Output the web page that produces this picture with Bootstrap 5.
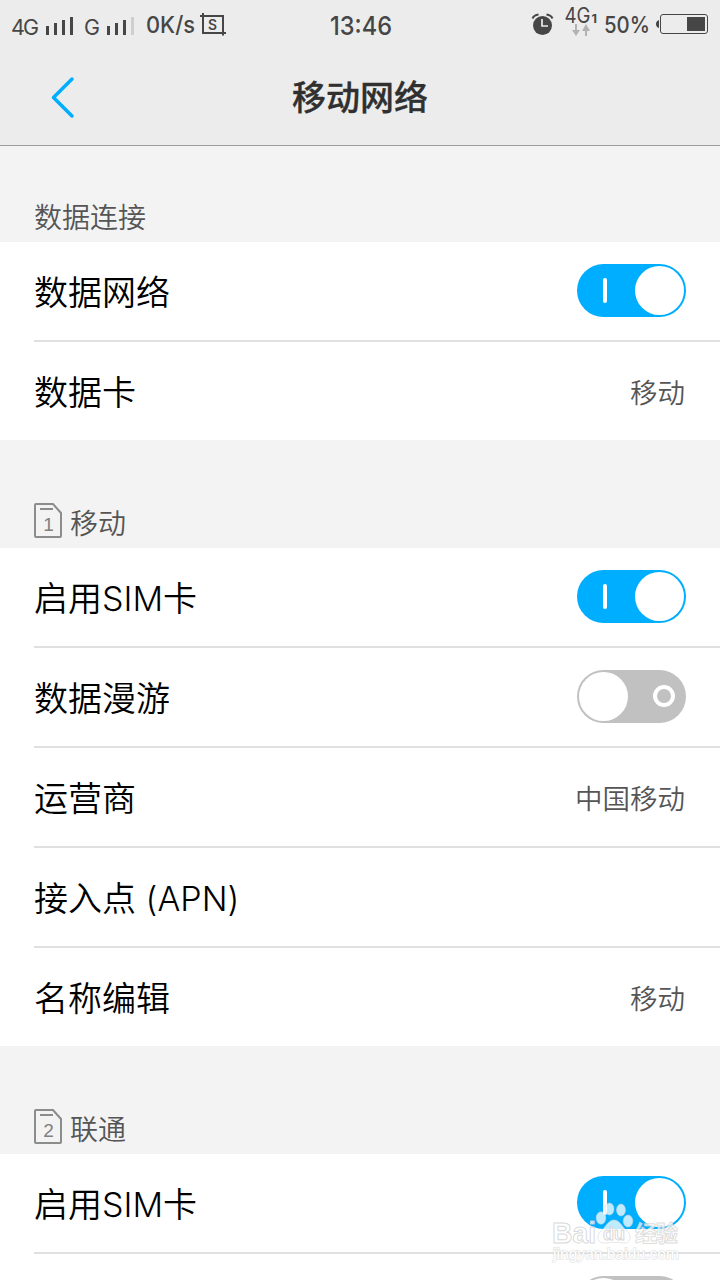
<!DOCTYPE html>
<html lang="zh-CN">
<head>
<meta charset="utf-8">
<meta name="viewport" content="width=device-width, initial-scale=1">
<title>移动网络</title>
<link rel="stylesheet" href="https://cdn.jsdelivr.net/npm/bootstrap@5.3.0/dist/css/bootstrap.min.css">
<style>
  body { font-family: Inter, "Noto Sans CJK SC", sans-serif; background: #f3f3f3; color: #000; }
  .screen { width: 720px; height: 1280px; background: #f3f3f3; }
  .topbar { height: 146px; background: #ececec; border-bottom: 1px solid #9c9c9c; }
  .status { height: 50px; color: #464646; }
  .status svg text { font-family: Inter, "Noto Sans CJK SC", sans-serif; fill: #464646; }
  .titlebar { height: 95px; }
  .titlebar h1 { font: 500 34px/50px "Noto Sans CJK SC", sans-serif; color: #303030; -webkit-text-stroke: .3px #303030; padding-bottom: 4px; }
  .back { width: 186px; padding-left: 50px; }
  .section-title { height: 108px; padding: 0 0 4px 34px; font-size: 28px; line-height: 40px; font-weight: 350; color: #555; gap: 8px; }
  .section-title.first { height: 96px; }
  .section-title svg { margin-bottom: 5px; }
  .settings { background: #fff; padding-left: 34px; }
  .setting { height: 100px; padding-right: 34px; border-bottom: 2px solid #e0e0e0; font-size: 34px; line-height: 50px; font-weight: 350; }
  .setting:last-child { height: 98px; border-bottom: 0; }
  .settings.open .setting:last-child { height: 100px; border-bottom: 2px solid #e0e0e0; }
  .setting > span { padding-top: 4px; }
  .setting .value { font-size: 27.5px; color: #555; margin-right: 1px; }
  .switch { width: 109px; height: 53px; border-radius: 27px; padding: 2px; background: #c1c1c1; margin-bottom: 2px; }
  .switch.on { background: #00aeff; flex-direction: row-reverse; }
  .knob { width: 49px; height: 49px; border-radius: 50%; background: #fff; }
  .tick { width: 4px; height: 25px; border-radius: 2px; background: #fff; margin-left: 24px; }
  .ring { width: 22px; height: 22px; border: 4px solid #fff; border-radius: 50%; margin-right: 9px; }
  .watermark { right: 32px; bottom: 12px; }
</style>
</head>
<body>
<main class="screen position-relative overflow-hidden">
  <header class="topbar">
    <div class="status d-flex justify-content-between">
      <svg width="240" height="50" viewBox="0 0 240 50">
        <text x="11" y="35" font-size="21.5" textLength="28">4G</text>
        <path fill="#464646" d="M46 26h3v9h-3zM54 23h3v12h-3zM62 20h3v15h-3zM70 17h3v18h-3z"/>
        <text x="84" y="35" font-size="21.5" textLength="16" lengthAdjust="spacingAndGlyphs">G</text>
        <path fill="#464646" d="M107 26h3v9h-3zM115 23h3v12h-3zM123 20h3v15h-3z"/>
        <path fill="#cfcfcf" d="M131 17h3v18h-3z"/>
        <text x="146" y="33" font-size="23" font-weight="450" textLength="49" lengthAdjust="spacingAndGlyphs">0K/s</text>
        <path fill="none" stroke="#464646" stroke-width="2" d="M200 16h23v19.500M203 13v20h23"/>
        <text x="208" y="29.500" font-size="14" font-weight="600" textLength="9" lengthAdjust="spacingAndGlyphs">S</text>
      </svg>
      <svg width="80" height="50" viewBox="320 0 80 50">
        <text x="330" y="35" font-size="26" font-weight="450" textLength="62" lengthAdjust="spacingAndGlyphs">13:46</text>
      </svg>
      <svg width="240" height="50" viewBox="480 0 240 50">
        <circle cx="542.500" cy="25.500" r="9.500" fill="#464646"/>
        <path d="M532.500 18.500q1.500-3.500 6-4M552.500 18.500q-1.500-3.500-6-4" fill="none" stroke="#464646" stroke-width="2"/>
        <path d="M542 19v7h6" fill="none" stroke="#ececec" stroke-width="1.700"/>
        <text x="564.500" y="23" font-size="21.500" textLength="26" lengthAdjust="spacingAndGlyphs">4G</text>
        <text x="591.500" y="23" font-size="12" font-weight="700" textLength="5.500" lengthAdjust="spacingAndGlyphs">1</text>
        <path fill="#b2b2b2" d="M575 24h2v6h3l-4 6-4-6h3zM585 36h2v-5h3l-4-7-4 7h3z"/>
        <text x="604" y="33" font-size="23" font-weight="450" textLength="46" lengthAdjust="spacingAndGlyphs">50%</text>
        <path fill="#464646" d="M659 20v8q-3-1-3-4t3-4zM687 17h18v14h-18z"/>
        <rect x="660.500" y="14.500" width="47" height="19" rx="2.500" fill="none" stroke="#464646"/>
      </svg>
    </div>
    <div class="titlebar d-flex align-items-center justify-content-between">
      <div class="back d-flex">
        <svg width="26" height="44" viewBox="0 0 26 44"><path d="M22 3 3.500 21.500 22 40" fill="none" stroke="#00aeff" stroke-width="3.500" stroke-linecap="round" stroke-linejoin="round"/></svg>
      </div>
      <h1 class="m-0">移动网络</h1>
      <div class="back"></div>
    </div>
  </header>

  <div class="section-title first d-flex align-items-end">数据连接</div>
  <section class="settings">
    <div class="setting d-flex align-items-center justify-content-between"><span>数据网络</span><div class="switch on d-flex align-items-center justify-content-between"><i class="knob"></i><i class="tick"></i></div></div>
    <div class="setting d-flex align-items-center justify-content-between"><span>数据卡</span><span class="value">移动</span></div>
  </section>

  <div class="section-title d-flex align-items-end">
    <svg width="28" height="36" viewBox="0 0 28 36"><path d="M2 1h17l8 9v23q0 1-1 1H2q-1 0-1-1V2q0-1 1-1zM6 6h13" fill="none" stroke="#8c8c8c" stroke-width="2"/><text x="14.500" y="28" text-anchor="middle" font-family="Liberation Sans" font-size="19" fill="#808080">1</text></svg>
    <span>移动</span>
  </div>
  <section class="settings">
    <div class="setting d-flex align-items-center justify-content-between"><span>启用SIM卡</span><div class="switch on d-flex align-items-center justify-content-between"><i class="knob"></i><i class="tick"></i></div></div>
    <div class="setting d-flex align-items-center justify-content-between"><span>数据漫游</span><div class="switch d-flex align-items-center justify-content-between"><i class="knob"></i><i class="ring"></i></div></div>
    <div class="setting d-flex align-items-center justify-content-between"><span>运营商</span><span class="value">中国移动</span></div>
    <div class="setting d-flex align-items-center justify-content-between"><span>接入点 (APN)</span></div>
    <div class="setting d-flex align-items-center justify-content-between"><span>名称编辑</span><span class="value">移动</span></div>
  </section>

  <div class="section-title d-flex align-items-end">
    <svg width="28" height="36" viewBox="0 0 28 36"><path d="M2 1h17l8 9v23q0 1-1 1H2q-1 0-1-1V2q0-1 1-1zM6 6h13" fill="none" stroke="#8c8c8c" stroke-width="2"/><text x="14.500" y="28" text-anchor="middle" font-family="Liberation Sans" font-size="19" fill="#808080">2</text></svg>
    <span>联通</span>
  </div>
  <section class="settings open">
    <div class="setting d-flex align-items-center justify-content-between"><span>启用SIM卡</span><div class="switch on d-flex align-items-center justify-content-between"><i class="knob"></i><i class="tick"></i></div></div>
    <div class="setting d-flex align-items-center justify-content-between"><span></span><div class="switch d-flex align-items-center justify-content-between"><i class="knob"></i><i class="ring"></i></div></div>
  </section>

  <svg class="watermark position-absolute" width="138" height="68" viewBox="550 1200 138 68">
    <g fill="#fff" fill-opacity=".75" stroke="#cfcfcf" stroke-opacity=".5" stroke-width="1">
      <ellipse cx="601" cy="1218" rx="4.800" ry="6.200"/>
      <ellipse cx="609.500" cy="1209" rx="4.500" ry="6"/>
      <ellipse cx="621" cy="1210" rx="4.500" ry="6"/>
      <ellipse cx="628" cy="1221" rx="4.800" ry="6"/>
      <path d="M614 1220c6 0 8 7 13 11 6 5 3 13-4 12-6-1-12-1-18 0-7 1-10-7-4-12 5-4 7-11 13-11z"/>
      <text x="552" y="1243" font-weight="700" font-family="Liberation Sans" font-size="29" textLength="44" lengthAdjust="spacingAndGlyphs" stroke-opacity=".8">Bai</text>
      <text x="603" y="1240" font-weight="700" font-family="Liberation Sans" font-size="18" textLength="22" lengthAdjust="spacingAndGlyphs" stroke-opacity=".8">du</text>
      <text x="635" y="1241" font-weight="700" font-family="Noto Sans CJK SC" font-size="22" textLength="43" stroke-opacity=".7">经验</text>
      <text x="553" y="1259" font-family="Liberation Sans" font-size="15" textLength="126" lengthAdjust="spacingAndGlyphs" paint-order="stroke" stroke-width="1.600" fill-opacity="1">jingyan.baidu.com</text>
    </g>
  </svg>
</main>
<script src="https://cdn.jsdelivr.net/npm/bootstrap@5.3.0/dist/js/bootstrap.bundle.min.js"></script>
</body>
</html>
